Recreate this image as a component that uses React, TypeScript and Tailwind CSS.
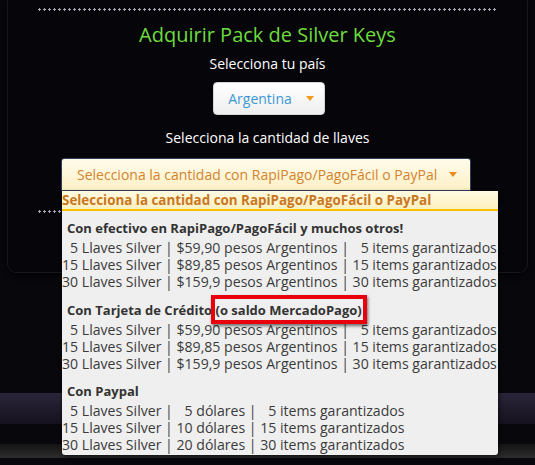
import React from "react";

type Row = { n: number; price: string; items: number };

const pesos: Row[] = [
  { n: 5, price: "$59,90", items: 5 },
  { n: 15, price: "$89,85", items: 15 },
  { n: 30, price: "$159,9", items: 30 },
];

const dolares: Row[] = [
  { n: 5, price: "5", items: 5 },
  { n: 15, price: "10", items: 15 },
  { n: 30, price: "20", items: 30 },
];

const Num = ({ v }: { v: number | string }) => (
  <span className="inline-block w-[2ch] text-right">{v}</span>
);

const Caret = ({ color }: { color: string }) => (
  <span className={`block h-0 w-0 border-x-[4px] border-t-[5px] border-x-transparent ${color}`} />
);

const Dots = () => (
  <div className="mx-auto h-[3px] w-[461px] bg-[radial-gradient(circle,#a3a2ae_1px,transparent_1.4px)] bg-[length:5px_3px] bg-repeat-x" />
);

const PesosRows = () => (
  <>
    {pesos.map((r) => (
      <div key={r.n} className="h-[17px] leading-[17px] whitespace-pre">
        <Num v={r.n} /> Llaves Silver | {r.price} pesos Argentinos | <Num v={r.items} /> items garantizados
      </div>
    ))}
  </>
);

export default function App() {
  return (
    <div className="h-[465px] w-full overflow-hidden bg-[#08070c] font-['Open_Sans',sans-serif]">
      <div className="mx-[7px] rounded-b-[9px] border-x border-b border-[#18171f] bg-[#06050a] pt-2 pb-[59px] shadow-[0_2px_6px_rgba(0,0,0,0.8)]">
        <Dots />
        <h1 className="mt-3 text-center text-[20px] leading-6 text-[#6cdc3e]">Adquirir Pack de Silver Keys</h1>
        <p className="mt-2 text-center text-[14px] leading-[18px] text-white">Selecciona tu país</p>
        <div className="mt-[9px] flex justify-center pl-[3px]">
          <button className="flex h-[33px] w-[112px] items-center justify-center gap-[14px] rounded-[4px] border border-[#d5d5d5] bg-gradient-to-b from-white to-[#efefef] pl-1 text-[14px] text-[#3c98d4]">
            Argentina
            <Caret color="border-t-[#f39a1c]" />
          </button>
        </div>
        <p className="mt-[14px] text-center text-[14px] leading-[18px] text-white">Selecciona la cantidad de llaves</p>
        <div className="relative mt-[11px] ml-[53px] w-[410px]">
          <div className="flex h-[33px] items-center justify-between rounded-t-[3px] border border-[#33405c] bg-gradient-to-b from-[#fffcec] to-[#fdf0c6] pr-[13px] pl-[15px] text-[14px] text-[#d4832e]">
            <span>Selecciona la cantidad con RapiPago/PagoFácil o PayPal</span>
            <Caret color="border-t-[#ea8a1c]" />
          </div>
          <div className="absolute top-[33px] left-px z-10 h-[264px] w-[436px] rounded-b-[3px] bg-[#efefef] text-[14.1px] text-[#3b3b3b] shadow-[1px_2px_5px_rgba(0,0,0,0.6)]">
            <div className="h-[20px] border-b-2 border-[#f5c200] bg-gradient-to-b from-[#fffae0] to-[#fdefc0] text-[13.4px] leading-[18px] font-bold text-[#c9771f]">
              Selecciona la cantidad con RapiPago/PagoFácil o PayPal
            </div>
            <div className="pt-2">
              <div className="h-[18px] pl-[5px] text-[13px] leading-[18px] font-bold text-[#333]">Con efectivo en RapiPago/PagoFácil y muchos otros!</div>
              <div className="mt-[2px]">
                <PesosRows />
              </div>
            </div>
            <div className="pt-[11px]">
              <div className="h-[18px] pl-[5px] text-[13px] leading-[18px] font-bold text-[#333]">
                Con Tarjeta de Crédito{" "}
                <span className="relative">
                  (o saldo MercadoPago)
                  <span className="absolute -top-[6px] -right-[5px] -bottom-[5px] -left-[5px] border-4 border-[#e8000c] shadow-[1px_2px_3px_rgba(0,0,0,0.55)]" />
                </span>
              </div>
              <div className="mt-[2px]">
                <PesosRows />
              </div>
            </div>
            <div className="pt-[10px]">
              <div className="h-[18px] pl-[5px] text-[13px] leading-[18px] font-bold text-[#333]">Con Paypal</div>
              <div className="mt-[2px]">
                {dolares.map((r) => (
                  <div key={r.n} className="h-[17px] leading-[17px] whitespace-pre">
                    <Num v={r.n} /> Llaves Silver | <Num v={r.price} /> dólares | <Num v={r.items} /> items garantizados
                  </div>
                ))}
              </div>
            </div>
          </div>
        </div>
        <div className="mt-[19px]">
          <Dots />
        </div>
      </div>
      <div className="mt-[120px] h-[31px] bg-gradient-to-b from-[#2b2539] to-[#16121e]" />
      <div className="mt-[20px] h-[14px] bg-gradient-to-b from-[#141414] to-[#2e2e2e]" />
    </div>
  );
}
